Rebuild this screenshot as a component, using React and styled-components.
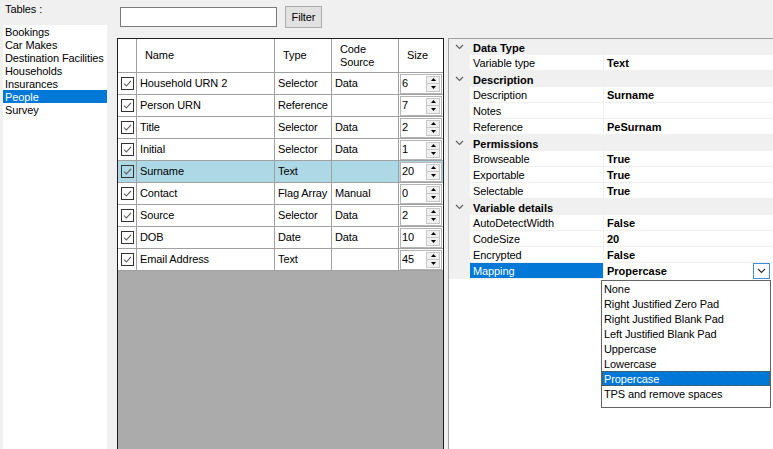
import React from "react";
import styled, { createGlobalStyle } from "styled-components";

const GlobalStyle = createGlobalStyle`
  html, body {
    margin: 0;
    padding: 0;
    background: #f0f0f0;
  }
  body {
    font-family: "Liberation Sans", Arial, sans-serif;
    font-size: 11px;
    letter-spacing: -0.1px;
    color: #000;
    overflow: hidden;
  }
`;

const Window = styled.div`
  display: flex;
  width: 773px;
  height: 449px;
  overflow: hidden;
  background: #f0f0f0;
`;

/* left: list of tables */
const TablesPane = styled.div`
  width: 107px;
  flex-shrink: 0;
  display: flex;
  flex-direction: column;
`;

const PaneLabel = styled.div`
  height: 25px;
  box-sizing: border-box;
  padding: 3px 0 0 5px;
  line-height: 13px;
`;

const TableList = styled.ul`
  flex: 1;
  margin: 0 0 0 3px;
  padding: 0;
  list-style: none;
  background: #fff;
`;

const TableItem = styled.li`
  height: 13px;
  line-height: 14px;
  padding-left: 2px;
  white-space: nowrap;
  background: ${(p) => (p.$selected ? "#0078d7" : "transparent")};
  color: ${(p) => (p.$selected ? "#fff" : "#000")};
`;

/* middle: filter + variables grid */
const MiddlePane = styled.div`
  width: 341px;
  flex-shrink: 0;
  box-sizing: border-box;
  padding: 0 4px 0 10px;
  display: flex;
  flex-direction: column;
`;

const Toolbar = styled.div`
  height: 38px;
  display: flex;
  align-items: flex-start;
  padding-top: 6px;
  box-sizing: border-box;
`;

const FilterInput = styled.div`
  width: 157px;
  height: 20px;
  margin: 1px 0 0 3px;
  box-sizing: border-box;
  border: 1px solid #7a7a7a;
  background: #fff;
`;

const Button = styled.div`
  width: 37px;
  height: 22px;
  margin-left: 8px;
  box-sizing: border-box;
  border: 1px solid #adadad;
  background: #e1e1e1;
  display: flex;
  align-items: center;
  justify-content: center;
`;

const Grid = styled.div`
  flex: 1;
  width: 327px;
  box-sizing: border-box;
  border: 1px solid #1e1e1e;
  border-bottom: none;
  background: #ababab;
  overflow: hidden;
`;

const GridRow = styled.div`
  display: flex;
  height: ${(p) => (p.$header ? "34px" : "22px")};
  box-sizing: border-box;
  border-bottom: 1px solid #a0a0a0;
  background: ${(p) => (p.$selected ? "#add8e6" : "#fff")};
`;

const Cell = styled.div`
  width: ${(p) => p.$w}px;
  flex-shrink: 0;
  box-sizing: border-box;
  border-right: ${(p) => (p.$last ? "none" : "1px solid #a0a0a0")};
  padding-left: ${(p) => (p.$header ? 8 : 3)}px;
  display: flex;
  align-items: center;
  line-height: 13px;
  white-space: nowrap;
  overflow: hidden;
`;

const CheckCell = styled(Cell)`
  padding-left: 3px;
`;

const SizeCell = styled(Cell)`
  padding: 1px;
`;

const SpinBox = styled.div`
  flex: 1;
  height: 20px;
  box-sizing: border-box;
  border: 1px solid #b4b4b4;
  background: #fff;
  display: flex;
  align-items: center;
  padding-left: 1px;
`;

const SpinValue = styled.span`
  flex: 1;
`;

const SpinButtons = styled.div`
  width: 14px;
  height: 16px;
  margin-right: 1px;
  display: flex;
  flex-direction: column;
`;

const SpinButton = styled.div`
  flex: 1;
  box-sizing: border-box;
  border: 1px solid #c8c8c8;
  background: #f0f0f0;
  display: flex;
  align-items: center;
  justify-content: center;
  & + & {
    border-top: none;
  }
`;

/* right: property grid */
const PropertyGrid = styled.div`
  position: relative;
  flex: 1;
  margin-top: 38px;
  border-left: 1px solid #a0a0a0;
  border-top: 1px solid #a0a0a0;
  background: #fff;
`;

const CategoryRow = styled.div`
  display: flex;
  align-items: center;
  height: 16px;
  line-height: 16px;
  background: #f0f0f0;
  font-weight: bold;
  letter-spacing: 0;
`;

const Gutter = styled.div`
  width: 21px;
  height: 100%;
  flex-shrink: 0;
  background: #f0f0f0;
  display: flex;
  align-items: center;
  justify-content: center;
`;

const CategoryTitle = styled.div`
  padding-left: 3px;
  padding-top: 1px;
`;

const PropRow = styled.div`
  display: flex;
  height: 16px;
`;

const PropName = styled.div`
  width: 134px;
  flex-shrink: 0;
  box-sizing: border-box;
  padding-left: 3px;
  line-height: 16px;
  border-right: 1px solid #f0f0f0;
  box-shadow: inset 0 -1px 0 #f0f0f0;
  background: ${(p) => (p.$selected ? "#0078d7" : "#fff")};
  color: ${(p) => (p.$selected ? "#fff" : "#000")};
`;

const PropValue = styled.div`
  position: relative;
  flex: 1;
  box-sizing: border-box;
  padding-left: 3px;
  line-height: 16px;
  font-weight: bold;
  letter-spacing: 0;
  box-shadow: inset 0 -1px 0 ${(p) => (p.$selected ? "#fff" : "#f0f0f0")};
`;

const DropButton = styled.div`
  position: absolute;
  right: 3px;
  top: 0;
  width: 17px;
  height: 16px;
  box-sizing: border-box;
  border: 1px solid #3c8fdc;
  background: #fff;
  display: flex;
  align-items: center;
  justify-content: center;
`;

const DropList = styled.ul`
  position: absolute;
  left: 152px;
  top: 241px;
  width: 170px;
  height: 128px;
  box-sizing: border-box;
  margin: 0;
  padding: 0;
  list-style: none;
  border: 1px solid #646464;
  background: #fff;
`;

const DropItem = styled.li`
  height: 15px;
  line-height: 16px;
  padding-left: 2px;
  white-space: nowrap;
  box-sizing: border-box;
  background: ${(p) => (p.$selected ? "#0078d7" : "transparent")};
  color: ${(p) => (p.$selected ? "#fff" : "#000")};
  outline: ${(p) => (p.$selected ? "1px dotted #6a4a1a" : "none")};
  outline-offset: -1px;
`;

const tables = [
  "Bookings",
  "Car Makes",
  "Destination Facilities",
  "Households",
  "Insurances",
  "People",
  "Survey",
];

const columns = [19, 138, 57, 67, 44];

const variables = [
  { name: "Household URN 2", type: "Selector", source: "Data", size: 6 },
  { name: "Person URN", type: "Reference", source: "", size: 7 },
  { name: "Title", type: "Selector", source: "Data", size: 2 },
  { name: "Initial", type: "Selector", source: "Data", size: 1 },
  { name: "Surname", type: "Text", source: "", size: 20, selected: true },
  { name: "Contact", type: "Flag Array", source: "Manual", size: 0 },
  { name: "Source", type: "Selector", source: "Data", size: 2 },
  { name: "DOB", type: "Date", source: "Data", size: 10 },
  { name: "Email Address", type: "Text", source: "", size: 45 },
];

const sections = [
  { title: "Data Type", rows: [["Variable type", "Text"]] },
  {
    title: "Description",
    rows: [
      ["Description", "Surname"],
      ["Notes", ""],
      ["Reference", "PeSurnam"],
    ],
  },
  {
    title: "Permissions",
    rows: [
      ["Browseable", "True"],
      ["Exportable", "True"],
      ["Selectable", "True"],
    ],
  },
  {
    title: "Variable details",
    rows: [
      ["AutoDetectWidth", "False"],
      ["CodeSize", "20"],
      ["Encrypted", "False"],
      ["Mapping", "Propercase", true],
    ],
  },
];

const mappings = [
  "None",
  "Right Justified Zero Pad",
  "Right Justified Blank Pad",
  "Left Justified Blank Pad",
  "Uppercase",
  "Lowercase",
  "Propercase",
  "TPS and remove spaces",
];

const CheckBox = () => (
  <svg width="13" height="13" viewBox="0 0 13 13">
    <rect x="0.5" y="0.5" width="12" height="12" fill="none" stroke="#333" />
    <path d="M3 6.5 L5.3 9 L10 3.8" fill="none" stroke="#555" strokeWidth="1.1" />
  </svg>
);

const Chevron = ({ color = "#606060" }) => (
  <svg width="9" height="6" viewBox="0 0 9 6">
    <path d="M1 1 L4.5 4.5 L8 1" fill="none" stroke={color} strokeWidth="1.2" />
  </svg>
);

const Arrow = ({ up }) => (
  <svg width="5" height="3" viewBox="0 0 5 3">
    <path d={up ? "M0 3 L2.5 0 L5 3 Z" : "M0 0 L5 0 L2.5 3 Z"} fill="#000" />
  </svg>
);

const App = () => {
  return (
    <Window>
      <GlobalStyle />
      <TablesPane>
        <PaneLabel>Tables :</PaneLabel>
        <TableList>
          {tables.map((t) => (
            <TableItem key={t} $selected={t === "People"}>
              {t}
            </TableItem>
          ))}
        </TableList>
      </TablesPane>

      <MiddlePane>
        <Toolbar>
          <FilterInput />
          <Button>Filter</Button>
        </Toolbar>
        <Grid>
          <GridRow $header>
            <Cell $w={columns[0]} $header />
            <Cell $w={columns[1]} $header>Name</Cell>
            <Cell $w={columns[2]} $header>Type</Cell>
            <Cell $w={columns[3]} $header>
              Code
              <br />
              Source
            </Cell>
            <Cell $w={columns[4]} $header $last>Size</Cell>
          </GridRow>
          {variables.map((v) => (
            <GridRow key={v.name} $selected={v.selected}>
              <CheckCell $w={columns[0]}>
                <CheckBox />
              </CheckCell>
              <Cell $w={columns[1]}>{v.name}</Cell>
              <Cell $w={columns[2]}>{v.type}</Cell>
              <Cell $w={columns[3]}>{v.source}</Cell>
              <SizeCell $w={columns[4]} $last>
                <SpinBox>
                  <SpinValue>{v.size}</SpinValue>
                  <SpinButtons>
                    <SpinButton>
                      <Arrow up />
                    </SpinButton>
                    <SpinButton>
                      <Arrow />
                    </SpinButton>
                  </SpinButtons>
                </SpinBox>
              </SizeCell>
            </GridRow>
          ))}
        </Grid>
      </MiddlePane>

      <PropertyGrid>
        {sections.map((s) => (
          <React.Fragment key={s.title}>
            <CategoryRow>
              <Gutter>
                <Chevron />
              </Gutter>
              <CategoryTitle>{s.title}</CategoryTitle>
            </CategoryRow>
            {s.rows.map(([name, value, selected]) => (
              <PropRow key={name}>
                <Gutter />
                <PropName $selected={selected}>{name}</PropName>
                <PropValue $selected={selected}>
                  {value}
                  {selected && (
                    <DropButton>
                      <Chevron color="#333" />
                    </DropButton>
                  )}
                </PropValue>
              </PropRow>
            ))}
          </React.Fragment>
        ))}
        <DropList>
          {mappings.map((m) => (
            <DropItem key={m} $selected={m === "Propercase"}>
              {m}
            </DropItem>
          ))}
        </DropList>
      </PropertyGrid>
    </Window>
  );
};

export default App;
